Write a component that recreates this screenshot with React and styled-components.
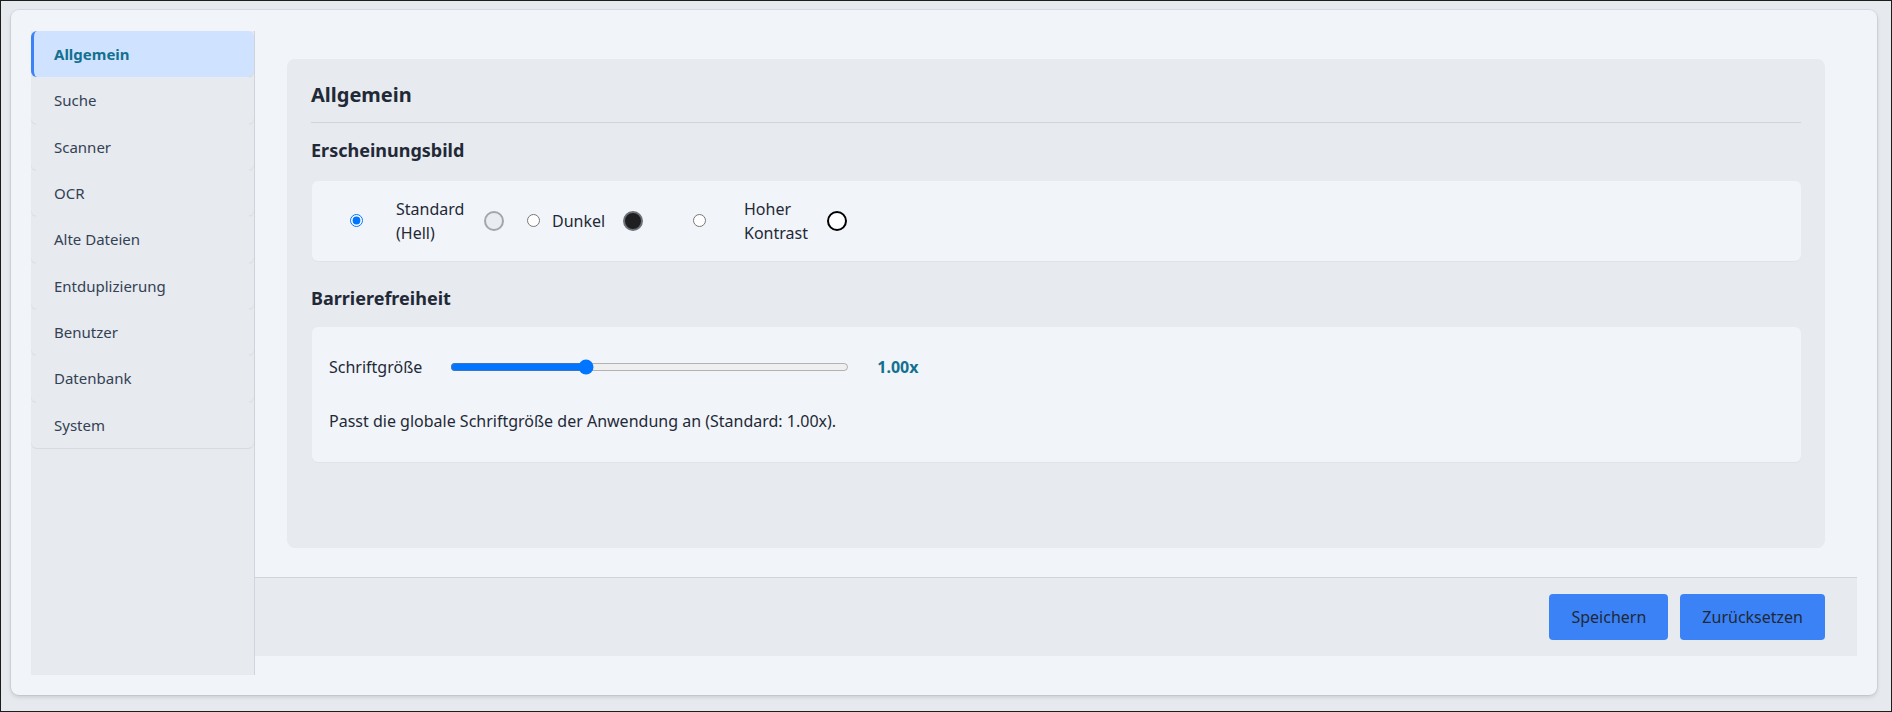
import React from "react";
import styled, { createGlobalStyle } from "styled-components";

const GlobalStyle = createGlobalStyle`
  html, body { margin: 0; padding: 0; }
  body {
    background: #e6e9ed;
    font-family: "Noto Sans", "Open Sans", sans-serif;
    color: #1f2937;
  }
  *, *::before, *::after { box-sizing: border-box; }
`;

const Page = styled.div`
  height: 100vh;
  border: 1px solid #1c1c1c;
  padding: 9px 14px 16px 10px;
  display: flex;
`;

const Card = styled.div`
  flex: 1;
  display: flex;
  background: #f1f5f9;
  border-radius: 8px;
  padding: 21px 20px 20px;
  box-shadow: 0 0 0 1px rgba(0, 0, 0, 0.05), 0 2px 4px rgba(0, 0, 0, 0.13);
`;

const Sidebar = styled.nav`
  width: 224px;
  flex-shrink: 0;
  background: #e7eaee;
  border-right: 1px solid #d1d5db;
  display: flex;
  flex-direction: column;
`;

const NavItem = styled.div`
  height: 46.33px;
  flex-shrink: 0;
  display: flex;
  align-items: center;
  padding-left: 20px;
  border-left: 3px solid ${(p) => (p.$active ? "#3b82f6" : "transparent")};
  border-radius: 6px;
  background: ${(p) => (p.$active ? "#cfe2ff" : "#e7eaee")};
  color: ${(p) => (p.$active ? "#13708f" : "#334155")};
  font-size: 15px;
  font-weight: ${(p) => (p.$active ? 700 : 400)};
  box-shadow: 0 1px 1px rgba(0, 0, 0, 0.07);
  cursor: pointer;
`;

const Main = styled.main`
  flex: 1;
  display: flex;
  flex-direction: column;
  min-width: 0;
`;

const Content = styled.div`
  flex: 1;
  display: flex;
  flex-direction: column;
  padding: 28px 32px 29px;
`;

const Panel = styled.section`
  flex: 1;
  background: #e7eaee;
  border-radius: 8px;
  padding: 24px;
`;

const PanelTitle = styled.h2`
  margin: 0;
  font-size: 20px;
  line-height: 24px;
  font-weight: 700;
  color: #1f2937;
  padding-bottom: 15px;
  border-bottom: 1px solid #d1d5db;
`;

const SectionTitle = styled.h3`
  margin: ${(p) => p.$top}px 0 ${(p) => p.$bottom}px;
  font-size: 18px;
  line-height: 21.6px;
  font-weight: 700;
  color: #1f2937;
`;

const Box = styled.div`
  background: #f1f5f9;
  border-radius: 6px;
  margin-left: 1px;
  box-shadow: 0 1px 1px rgba(0, 0, 0, 0.03);
`;

const ThemeBox = styled(Box)`
  display: flex;
  align-items: center;
  gap: 23px;
  padding: 16px 16px 16px 17px;
`;

const ThemeOption = styled.label`
  display: flex;
  align-items: center;
  gap: 12px;
  cursor: pointer;
`;

const RadioSlot = styled.span`
  width: ${(p) => p.$w}px;
  display: flex;
  justify-content: center;
  align-items: center;
`;

const Radio = styled.input`
  margin: 0;
  width: 13px;
  height: 13px;
`;

const OptionText = styled.span`
  width: ${(p) => p.$w}px;
  font-size: 16px;
  line-height: 24px;
  color: #1f2937;
`;

const Swatch = styled.span`
  width: 20px;
  height: 20px;
  border-radius: 50%;
  flex-shrink: 0;
  background: ${(p) => p.$fill};
  border: ${(p) => p.$bw}px solid ${(p) => p.$ring};
`;

const A11yBox = styled(Box)`
  padding: 28px 16px 29px 17px;
`;

const SliderRow = styled.div`
  display: flex;
  align-items: center;
  gap: 26px;
  min-height: 24px;
`;

const RowLabel = styled.span`
  font-size: 16px;
  line-height: 24px;
  color: #1f2937;
`;

const Slider = styled.input`
  width: 399px;
  margin: 0 2px;
`;

const Value = styled.span`
  font-size: 16px;
  line-height: 24px;
  font-weight: 700;
  color: #13708f;
`;

const Hint = styled.p`
  margin: 30px 0 0;
  font-size: 16px;
  line-height: 24px;
  color: #1f2937;
`;

const Footer = styled.footer`
  display: flex;
  justify-content: flex-end;
  gap: 12px;
  padding: 16px 32px;
  background: #e7eaee;
  border-top: 1px solid #d1d5db;
  margin-bottom: 19px;
`;

const Button = styled.button`
  height: 46px;
  padding: 0 22px;
  border: none;
  border-radius: 4px;
  background: #3b82f6;
  color: #1f2937;
  font-family: "Noto Sans", "Open Sans", sans-serif;
  font-size: 16px;
  cursor: pointer;
`;

const navItems = [
  "Allgemein",
  "Suche",
  "Scanner",
  "OCR",
  "Alte Dateien",
  "Entduplizierung",
  "Benutzer",
  "Datenbank",
  "System",
];

const themes = [
  { id: "light", label: "Standard (Hell)", slot: 55, text: 76, fill: "#e9ecf0", ring: "#a3a7ad", bw: 2, checked: true },
  { id: "dark", label: "Dunkel", slot: 13, text: 59, fill: "#1f1f22", ring: "#6b7079", bw: 2, checked: false },
  { id: "contrast", label: "Hoher Kontrast", slot: 66, text: 71, fill: "#ffffff", ring: "#000000", bw: 2.5, checked: false },
];

export default function App() {
  return (
    <>
      <GlobalStyle />
      <Page>
        <Card>
          <Sidebar>
            {navItems.map((item, i) => (
              <NavItem key={item} $active={i === 0}>
                {item}
              </NavItem>
            ))}
          </Sidebar>
          <Main>
            <Content>
              <Panel>
                <PanelTitle>Allgemein</PanelTitle>
                <SectionTitle $top={17} $bottom={19}>Erscheinungsbild</SectionTitle>
                <ThemeBox>
                  {themes.map((t) => (
                    <ThemeOption key={t.id}>
                      <RadioSlot $w={t.slot}>
                        <Radio type="radio" name="theme" value={t.id} defaultChecked={t.checked} />
                      </RadioSlot>
                      <OptionText $w={t.text}>{t.label}</OptionText>
                      <Swatch $fill={t.fill} $ring={t.ring} $bw={t.bw} />
                    </ThemeOption>
                  ))}
                </ThemeBox>
                <SectionTitle $top={27} $bottom={18}>Barrierefreiheit</SectionTitle>
                <A11yBox>
                  <SliderRow>
                    <RowLabel>Schriftgröße</RowLabel>
                    <Slider type="range" min="0.5" max="2" step="0.05" defaultValue="1" />
                    <Value>1.00x</Value>
                  </SliderRow>
                  <Hint>Passt die globale Schriftgröße der Anwendung an (Standard: 1.00x).</Hint>
                </A11yBox>
              </Panel>
            </Content>
            <Footer>
              <Button>Speichern</Button>
              <Button>Zurücksetzen</Button>
            </Footer>
          </Main>
        </Card>
      </Page>
    </>
  );
}
